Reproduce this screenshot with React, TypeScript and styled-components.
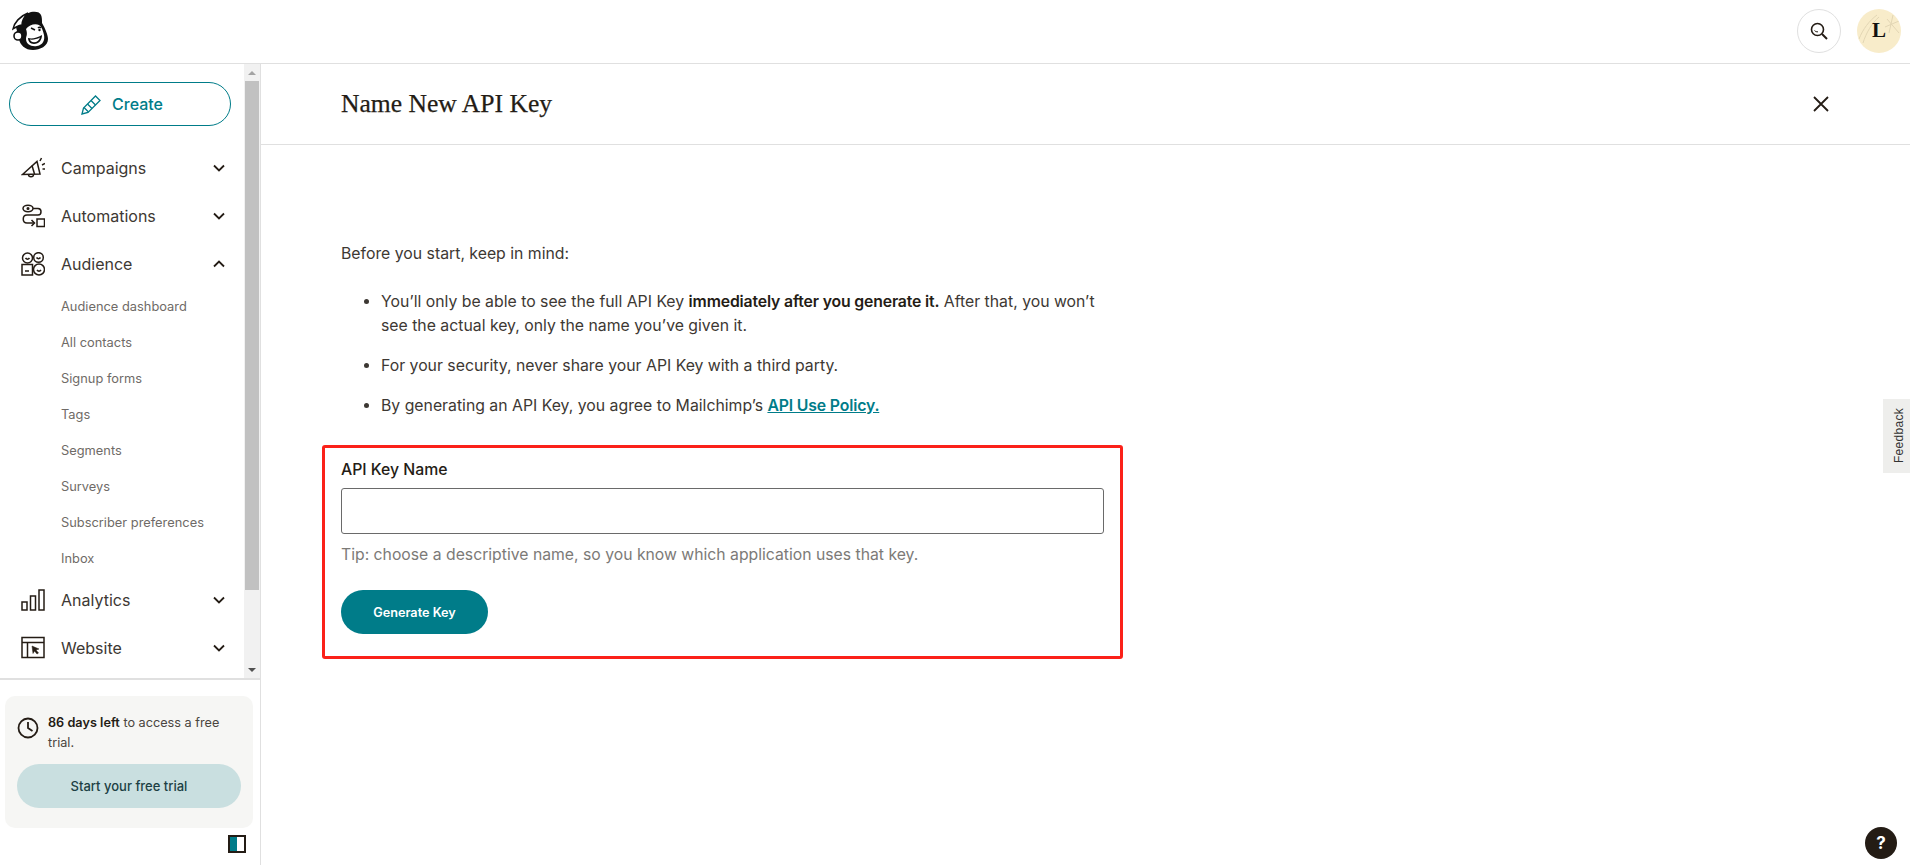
import { ReactNode } from 'react'
import styled, { createGlobalStyle } from 'styled-components'

const ink = '#241c15'
const teal = '#007c89'
const line = '#e0e0e0'

const GlobalStyle = createGlobalStyle`
  html, body { margin: 0; padding: 0; background: #fff; }
  body { font-family: Inter, "Liberation Sans", sans-serif; color: ${ink}; overflow: hidden; }
  * { box-sizing: border-box; }
`

const Page = styled.div`
  width: 1910px;
  height: 865px;
  display: grid;
  grid-template-columns: 261px 1fr;
  grid-template-rows: 64px 1fr;
  overflow: hidden;
`

const TopBar = styled.header`
  grid-column: 1 / 3;
  display: flex;
  align-items: center;
  justify-content: space-between;
  padding: 0 9px 2px 11px;
  border-bottom: 1px solid ${line};
`

const TopActions = styled.div`
  display: flex;
  align-items: center;
  gap: 16px;
`

const RoundButton = styled.button`
  width: 44px;
  height: 44px;
  padding: 0;
  border-radius: 50%;
  border: 1px solid ${line};
  background: #fff;
  display: flex;
  align-items: center;
  justify-content: center;
`

const Avatar = styled.div`
  position: relative;
  width: 44px;
  height: 44px;
  border-radius: 50%;
  overflow: hidden;
  background: #f8ecca;
  display: flex;
  align-items: center;
  justify-content: center;
  font-family: "Liberation Serif", serif;
  font-weight: 700;
  font-size: 21px;
  color: #111;

  svg { position: absolute; inset: 0; }
  span { position: relative; }
`

const Sidebar = styled.aside`
  border-right: 1px solid ${line};
  display: flex;
  flex-direction: column;
  min-height: 0;
`

const NavScroll = styled.div`
  height: 616px;
  display: flex;
  border-bottom: 2px solid ${line};
  flex-shrink: 0;
`

const NavColumn = styled.nav`
  width: 244px;
  padding: 18px 0 0 0;
  display: flex;
  flex-direction: column;
  overflow: hidden;
`

const CreateButton = styled.button`
  margin: 0 0 18px 9px;
  padding: 0 0 0 4px;
  width: 222px;
  height: 44px;
  flex-shrink: 0;
  border-radius: 22px;
  border: 1px solid ${teal};
  background: #fff;
  color: ${teal};
  font-family: inherit;
  font-size: 16px;
  font-weight: 500;
  display: flex;
  align-items: center;
  justify-content: center;
  gap: 10px;
`

const NavRow = styled.div`
  height: 48px;
  flex-shrink: 0;
  display: grid;
  grid-template-columns: 24px 1fr 14px;
  align-items: center;
  column-gap: 16px;
  padding: 0 18px 0 21px;
  font-size: 16px;
  color: #3d3833;
`

const SubList = styled.div`
  display: flex;
  flex-direction: column;
`

const SubItem = styled.div`
  height: 36px;
  display: flex;
  align-items: center;
  padding-left: 61px;
  font-size: 12.85px;
  color: #6f6b67;
`

const ScrollTrack = styled.div`
  width: 16px;
  background: #f1f1f1;
  display: flex;
  flex-direction: column;
  align-items: center;
  padding: 0 1px;
`

const ScrollArrow = styled.div<{ $down?: boolean }>`
  height: 17px;
  flex-shrink: 0;
  display: flex;
  align-items: center;
  justify-content: center;

  &::before {
    content: '';
    border-left: 4px solid transparent;
    border-right: 4px solid transparent;
    ${p => (p.$down ? 'border-top: 4px solid #505050;' : 'border-bottom: 4px solid #a3a3a3;')}
  }
`

const ScrollThumb = styled.div`
  width: 100%;
  height: 509px;
  flex-shrink: 0;
  background: #c1c1c1;
`

const ScrollGap = styled.div`
  flex: 1;
`

const TrialArea = styled.div`
  flex: 1;
  padding: 16px 7px 0 5px;
  display: flex;
  flex-direction: column;
`

const TrialCard = styled.div`
  height: 132px;
  border-radius: 10px;
  background: #f6f6f4;
  padding: 15px 12px 0 12px;
`

const TrialText = styled.div`
  display: grid;
  grid-template-columns: 22px 1fr;
  column-gap: 9px;
  padding-top: 2px;
  font-size: 12.7px;
  line-height: 20px;
  color: #4a4540;

  b { font-weight: 600; color: ${ink}; }
  svg { margin-top: 4px; }
`

const TrialButton = styled.button`
  margin-top: 11px;
  width: 224px;
  height: 44px;
  border: 0;
  border-radius: 22px;
  background: #c9dfe0;
  color: #1c3f44;
  font-family: inherit;
  font-size: 13px;
  font-weight: 500;
`

const CollapseToggle = styled.div`
  align-self: flex-end;
  margin: 7px 7px 0 0;
  width: 18px;
  height: 18px;
  border: 2px solid ${ink};
  background: linear-gradient(90deg, ${teal} 50%, #fff 50%);
`

const Main = styled.main`
  display: flex;
  flex-direction: column;
  min-width: 0;
`

const TitleBar = styled.div`
  height: 81px;
  flex-shrink: 0;
  display: flex;
  align-items: center;
  justify-content: space-between;
  padding: 0 81px 0 80px;
  border-bottom: 1px solid ${line};
`

const Title = styled.h1`
  margin: 0;
  font-family: "Liberation Serif", serif;
  font-weight: 400;
  font-size: 25.6px;
  -webkit-text-stroke: 0.25px ${ink};
`

const Body = styled.div`
  width: 830px;
  padding: 97px 0 0 61px;
  font-size: 15.8px;
  line-height: 24px;
  color: #3d3833;
`

const Intro = styled.p`
  margin: 0 0 24px 19px;
`

const Bullets = styled.ul`
  margin: 0 0 27px 19px;
  padding: 0 0 0 40px;
  width: 770px;

  li { margin-bottom: 16px; }
  b { font-weight: 600; letter-spacing: -0.01em; color: ${ink}; }
`

const PolicyLink = styled.a`
  color: ${teal};
  font-weight: 600;
  letter-spacing: -0.01em;
  text-decoration: underline;
`

const FormBox = styled.section`
  width: 801px;
  height: 214px;
  border: 3px solid #fb2119;
  border-radius: 3px;
  padding: 10px 16px 0 16px;
`

const FieldLabel = styled.label`
  display: block;
  font-weight: 500;
  color: ${ink};
  font-size: 15.8px;
  line-height: 24px;
  margin-bottom: 6px;
`

const TextInput = styled.input`
  display: block;
  width: 763px;
  height: 46px;
  border: 1px solid #6a6a6a;
  border-radius: 3px;
  background: #fff;
`

const Tip = styled.div`
  margin-top: 9px;
  font-size: 15.75px;
  line-height: 24px;
  color: #7c7a77;
`

const GenerateButton = styled.button`
  margin-top: 23px;
  width: 147px;
  height: 44px;
  border: 0;
  border-radius: 22px;
  background: ${teal};
  color: #fff;
  font-family: inherit;
  font-size: 12.7px;
  font-weight: 600;
`

const FeedbackTab = styled.div`
  position: fixed;
  top: 399px;
  right: 0;
  width: 27px;
  height: 74px;
  padding-left: 5px;
  background: #eeeeec;
  display: flex;
  align-items: center;
  justify-content: center;
  font-family: "Liberation Sans", sans-serif;
  font-size: 12px;
  letter-spacing: 0.3px;
  color: #333;

  span { writing-mode: vertical-rl; transform: rotate(180deg); }
`

const HelpBubble = styled.div`
  position: fixed;
  left: 1865px;
  top: 827px;
  width: 32px;
  height: 32px;
  border-radius: 50%;
  background: ${ink};
  color: #fff;
  display: flex;
  align-items: center;
  justify-content: center;
  font-size: 17px;
  font-weight: 700;
`

const Glyph = ({ children, w = 24, h = 24 }: { children: ReactNode; w?: number; h?: number }) => (
  <svg width={w} height={h} viewBox={`0 0 ${w} ${h}`} fill="none" stroke={ink} strokeWidth="1.5">
    {children}
  </svg>
)

const Logo = () => (
  <svg width="38" height="40" viewBox="0 0 38 40">
    <path d="M6 20C3 13 9 4 20 1c5-1 9 0 10 3 1 2 1 5 1 8 3 5 6 12 6 16 0 7-8 11-15 11-8 0-13-5-14-11-3-1-6-3-2-8z" fill="#111" />
    <path d="M2 18C3 12 9 5 17 2c-3 3-6 8-6 12-3 0-6 2-9 4z" fill="#fff" stroke="#111" strokeWidth="1.5" />
    <circle cx="7" cy="25" r="4" fill="#fff" stroke="#111" strokeWidth="1.6" />
    <path d="M15 18c3-4 9-6 13-4 3 2 4 6 5 10 1 5-1 10-7 11-6 1-11-2-11-7 0-3 2-4 0-10z" fill="#fff" />
    <path d="M17 27c4 1 9 0 14-3 0 5-3 9-8 9-4 0-6-3-6-6z" fill="#111" />
    <path d="M19 28.500c3 .5 7-.4 10-2-1 3-3 4.800-6 4.800-2 0-3.500-1-4-2.800z" fill="#fff" />
    <path d="M20 17l4 2M27 17c1-1 2-1 3 0" stroke="#111" strokeWidth="1.6" fill="none" />
    <circle cx="28.500" cy="19" r="1.200" fill="#111" />
  </svg>
)

const Chevron = ({ up }: { up?: boolean }) => (
  <svg width="14" height="14" viewBox="0 0 14 14" fill="none" stroke={ink} strokeWidth="1.8">
    <path d={up ? 'M2 9.500l5-5 5 5' : 'M2 4.500l5 5 5-5'} />
  </svg>
)

const CampaignsIcon = () => (
  <Glyph>
    <path d="M1.500 18.500L16 5.500l3 12.500z" />
    <path d="M11 9.500l2.500 8.500" />
    <path d="M7.500 18.500c0 3 5 3 5 0" />
    <path d="M19 5l1.500-3M21 9l3-1.500M21.500 13h2.500" />
  </Glyph>
)

const AutomationsIcon = () => (
  <Glyph>
    <ellipse cx="7" cy="4.500" rx="5" ry="3.200" />
    <circle cx="7" cy="4.500" r=".8" fill={ink} />
    <path d="M12 4.500h5c4 0 4 6.500 0 6.500H6c-5 0-5 8 0 8h7" />
    <path d="M10.500 16l3 3-3 3" />
    <rect x="16" y="15" width="7.500" height="7.500" />
  </Glyph>
)

const AudienceIcon = () => (
  <Glyph>
    <circle cx="6.500" cy="6" r="5" />
    <circle cx="17.500" cy="5.500" r="4.800" />
    <rect x="1" y="12.500" width="10.500" height="10.500" />
    <circle cx="18" cy="17.500" r="5.500" />
    <path d="M4.500 6c1 1.500 3 1.500 4 0M15.500 5.500c1 1.500 3 1.500 4 0M16 18c1 1.500 3 1.500 4 0M4 19h4" />
  </Glyph>
)

const AnalyticsIcon = () => (
  <Glyph>
    <rect x="1" y="14" width="5" height="8" />
    <rect x="9.500" y="8" width="5" height="14" />
    <rect x="18" y="2" width="5" height="20" />
  </Glyph>
)

const WebsiteIcon = () => (
  <Glyph>
    <rect x="1" y="1.500" width="22" height="20" />
    <path d="M1 6.500h22M6.500 6.500v15" />
    <path d="M11 10l7 3-3 1 2.500 3-1.500 1-2.500-3-1.500 2.500z" fill={ink} strokeWidth=".5" />
  </Glyph>
)

const navTop = [
  { label: 'Campaigns', icon: <CampaignsIcon /> },
  { label: 'Automations', icon: <AutomationsIcon /> },
  { label: 'Audience', icon: <AudienceIcon />, open: true },
]

const navBottom = [
  { label: 'Analytics', icon: <AnalyticsIcon /> },
  { label: 'Website', icon: <WebsiteIcon /> },
]

const audienceItems = [
  'Audience dashboard',
  'All contacts',
  'Signup forms',
  'Tags',
  'Segments',
  'Surveys',
  'Subscriber preferences',
  'Inbox',
]

export default function App() {
  return (
    <Page>
      <GlobalStyle />
      <TopBar>
        <Logo />
        <TopActions>
          <RoundButton aria-label="Search">
            <svg width="20" height="20" viewBox="0 0 20 20" fill="none" stroke={ink} strokeWidth="1.600">
              <circle cx="8.500" cy="8.500" r="6" />
              <path d="M13 13l5 5" strokeWidth="2" />
              <path d="M5.500 9.500c.8 1 2 1.500 3.500 1.300" strokeWidth="1" />
            </svg>
          </RoundButton>
          <Avatar>
            <svg width="44" height="44" viewBox="0 0 44 44" fill="none" stroke="#e2d6b4" strokeWidth="1">
              <path d="M2 30C6 20 12 12 20 6M6 34C9 24 15 14 22 8M30 10l12 14M36 6l-4 18M28 18l14-6M28 50l4-8" />
            </svg>
            <span>L</span>
          </Avatar>
        </TopActions>
      </TopBar>

      <Sidebar>
        <NavScroll>
          <NavColumn>
            <CreateButton>
              <svg width="21" height="21" viewBox="0 0 21 21" fill="none" stroke={teal} strokeWidth="1.300">
                <path d="M1 20l1.500-6L14.500 2l4.500 4.500L7 18.500z" />
                <path d="M3 13.500l4.500 4.500M6.500 10l4.500 4.500M10 6.500l4.500 4.500" />
              </svg>
              Create
            </CreateButton>
            {navTop.map(item => (
              <NavRow key={item.label}>
                {item.icon}
                <span>{item.label}</span>
                <Chevron up={item.open} />
              </NavRow>
            ))}
            <SubList>
              {audienceItems.map(label => (
                <SubItem key={label}>{label}</SubItem>
              ))}
            </SubList>
            {navBottom.map(item => (
              <NavRow key={item.label}>
                {item.icon}
                <span>{item.label}</span>
                <Chevron />
              </NavRow>
            ))}
          </NavColumn>
          <ScrollTrack>
            <ScrollArrow />
            <ScrollThumb />
            <ScrollGap />
            <ScrollArrow $down />
          </ScrollTrack>
        </NavScroll>
        <TrialArea>
          <TrialCard>
            <TrialText>
              <svg width="22" height="22" viewBox="0 0 22 22" fill="none" stroke={ink} strokeWidth="1.800">
                <circle cx="11" cy="11" r="9.500" />
                <path d="M11 5v6l4.500 3" />
              </svg>
              <div>
                <b>86 days left</b> to access a free trial.
              </div>
            </TrialText>
            <TrialButton>Start your free trial</TrialButton>
          </TrialCard>
          <CollapseToggle />
        </TrialArea>
      </Sidebar>

      <Main>
        <TitleBar>
          <Title>Name New API Key</Title>
          <svg width="16" height="16" viewBox="0 0 16 16" fill="none" stroke={ink} strokeWidth="1.800">
            <path d="M1 1l14 14M15 1L1 15" />
          </svg>
        </TitleBar>
        <Body>
          <Intro>Before you start, keep in mind:</Intro>
          <Bullets>
            <li>
              You’ll only be able to see the full API Key <b>immediately after you generate it.</b> After that, you won’t see the actual key, only the name you’ve given it.
            </li>
            <li>For your security, never share your API Key with a third party.</li>
            <li>
              By generating an API Key, you agree to Mailchimp’s <PolicyLink>API Use Policy.</PolicyLink>
            </li>
          </Bullets>
          <FormBox>
            <FieldLabel>API Key Name</FieldLabel>
            <TextInput />
            <Tip>Tip: choose a descriptive name, so you know which application uses that key.</Tip>
            <GenerateButton>Generate Key</GenerateButton>
          </FormBox>
        </Body>
      </Main>

      <FeedbackTab><span>Feedback</span></FeedbackTab>
      <HelpBubble>?</HelpBubble>
    </Page>
  )
}
